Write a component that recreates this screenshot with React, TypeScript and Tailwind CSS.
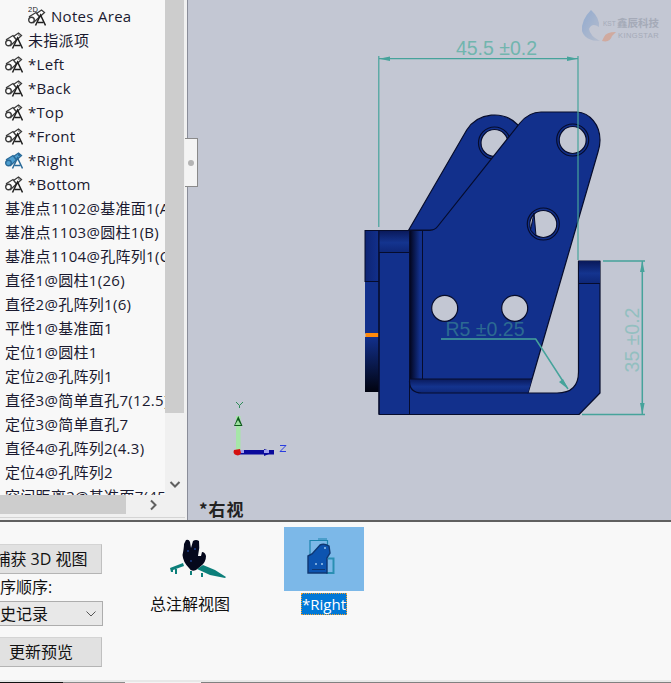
import React from "react";

const cjk = "font-['Open_Sans','Noto_Sans_CJK_SC',sans-serif]";

function TagIcon({ active }: { active?: boolean }) {
  const s = active ? "#2a6a98" : "#3a3a3a";
  const f = active ? "#4f9fd0" : "#fff";
  return (
    <svg width="18" height="17" viewBox="0 0 18 17" className="shrink-0">
      <path d="M8.5 4.5 L13.5 1 L16.5 3.5 L11.5 8 Z" fill={f} stroke={s} strokeWidth="1.3" />
      <circle cx="14" cy="3" r="0.9" fill={active ? "#1f5a88" : "#777"} />
      <path d="M1.5 7.5 L8 3.5 L11.5 8 L5.5 13.5 Z" fill={f} stroke={s} strokeWidth="1.3" />
      <circle cx="3.5" cy="11" r="2.8" fill={f} stroke={s} strokeWidth="1.4" />
      <path d="M7.5 16.5 L12.5 6 L17.5 16.5 M9.8 13.5 H15.2" fill="none" stroke={active ? "#2a6a98" : "#1f1f1f"} strokeWidth="1.5" />
    </svg>
  );
}

function NotesIcon() {
  return (
    <svg width="18" height="22" viewBox="0 0 18 22" className="shrink-0">
      <path d="M8.5 8.5 L13.5 5 L16.5 7.5 L11.5 12 Z" fill="#fff" stroke="#3a3a3a" strokeWidth="1.3" />
      <path d="M1.5 11.5 L8 7.5 L11.5 12 L5.5 17.5 Z" fill="#fff" stroke="#3a3a3a" strokeWidth="1.3" />
      <circle cx="3.5" cy="15" r="2.8" fill="#fff" stroke="#3a3a3a" strokeWidth="1.4" />
      <path d="M7.5 20.5 L12.5 10 L17.5 20.5 M9.8 17.5 H15.2" fill="none" stroke="#1f1f1f" strokeWidth="1.5" />
      <text x="0" y="7" fontFamily="Liberation Sans, sans-serif" fontSize="7.5" fill="#222">2D</text>
    </svg>
  );
}

const tagged = ["未指派项", "*Left", "*Back", "*Top", "*Front", "*Right", "*Bottom"];
const plain = [
  "基准点1102@基准面1(A)",
  "基准点1103@圆柱1(B)",
  "基准点1104@孔阵列1(C)",
  "直径1@圆柱1(26)",
  "直径2@孔阵列1(6)",
  "平性1@基准面1",
  "定位1@圆柱1",
  "定位2@孔阵列1",
  "直径3@简单直孔7(12.5)",
  "定位3@简单直孔7",
  "直径4@孔阵列2(4.3)",
  "定位4@孔阵列2",
  "空间距离2@基准面7(45.5)",
];

function Tree() {
  return (
    <div className="w-[165px] h-full bg-[#f8f8f8] overflow-hidden pt-[4px] tracking-[0.3px]">
      <div className="h-[24px] flex items-center pl-[28px] gap-[5px] text-[15px] leading-[24px] text-[#1a1a30] whitespace-nowrap">
        <NotesIcon />
        Notes Area
      </div>
      {tagged.map((t) => (
        <div key={t} className="h-[24px] flex items-center pl-[5px] gap-[5px] text-[15px] leading-[24px] text-[#1a1a30] whitespace-nowrap">
          <TagIcon active={t === "*Right"} />
          {t}
        </div>
      ))}
      {plain.map((t) => (
        <div key={t} className="h-[24px] flex items-center pl-[5px] text-[15px] leading-[24px] text-[#1a1a30] whitespace-nowrap">
          {t}
        </div>
      ))}
    </div>
  );
}

function Chevron({ d }: { d: string }) {
  return (
    <svg width="12" height="12" viewBox="0 0 12 12">
      <path d={d} fill="none" stroke="#606060" strokeWidth="2" />
    </svg>
  );
}

function Part() {
  const teal = "#46a39b";
  const blue = "#12308c";
  const line = "#060c2c";
  return (
    <svg viewBox="188 0 483 520" className="w-full h-full block">
      <defs>
        <linearGradient id="fade" x1="0" x2="1" y1="0" y2="0">
          <stop offset="0" stopColor="#02041a" />
          <stop offset="0.8" stopColor="#12308c" />
        </linearGradient>
        <linearGradient id="vdark" x1="0" x2="0" y1="0" y2="1">
          <stop offset="0" stopColor="#12308c" />
          <stop offset="1" stopColor="#01030f" />
        </linearGradient>
        <linearGradient id="band" x1="0" x2="0" y1="0" y2="1">
          <stop offset="0" stopColor="#0a1a5c" />
          <stop offset="0.55" stopColor="#14348f" />
          <stop offset="1" stopColor="#0e2778" />
        </linearGradient>
        <linearGradient id="col" x1="0" x2="1" y1="0" y2="0">
          <stop offset="0" stopColor="#0d2474" />
          <stop offset="1" stopColor="#12308c" />
        </linearGradient>
        <linearGradient id="drop" x1="0" x2="1" y1="0" y2="1">
          <stop offset="0" stopColor="#8aa6cf" />
          <stop offset="1" stopColor="#b4bccd" />
        </linearGradient>
      </defs>

      {/* back flap */}
      <path d="M408.7 230 L466.7 130 A33 33 0 0 1 518 125 L470 230 Z" fill={blue} stroke={line} strokeWidth="1.2" />
      <circle cx="494.5" cy="143" r="16" fill={blue} stroke={line} strokeWidth="1.2" />
      <circle cx="494.5" cy="143" r="13.5" fill="#c3c7d3" stroke={line} strokeWidth="1.2" />

      {/* left column */}
      <rect x="365" y="230.5" width="14.5" height="103" fill={blue} />
      <rect x="365" y="337" width="14.5" height="55" fill="url(#vdark)" />
      <rect x="365" y="230.5" width="14.5" height="51" fill="url(#col)" stroke={line} strokeWidth="1" />
      <rect x="365.5" y="333" width="14" height="4" fill="#ff8a0c" />

      {/* main body */}
      <path
        d="M379 230.5 H430 Q435 230 438 226 L520 123 Q529 112 541 112 H577 A24 28 0 0 1 600 140 Q600 146 598 152 L528 393 H557 Q578.5 393 578.5 372 V261 H600 V393 L579 414.5 H379 Z"
        fill={blue}
        stroke={line}
        strokeWidth="1.2"
        strokeLinejoin="round"
      />

      {/* shaded faces of the bracket */}
      <rect x="379" y="231" width="30" height="21" fill="url(#band)" />
      <rect x="409.5" y="231" width="13" height="148" fill="url(#fade)" />
      <path d="M409.5 379 H532 L528 393 H422 Q409.5 393 409.5 381 Z" fill="url(#band)" />
      <path d="M379 230.5 V414 M409.5 230.5 V414 M422.5 230.5 V379 M379 252.5 H409.5 M410 379 H532" fill="none" stroke={line} strokeWidth="1" />
      <path d="M409.5 381 Q409.5 393 422 393 H528" fill="none" stroke={line} strokeWidth="1.2" />
      <rect x="579" y="261.5" width="21" height="21.5" fill="url(#band)" />
      <path d="M578.5 283.5 H600" stroke={line} strokeWidth="1" />

      {/* holes */}
      <circle cx="572.7" cy="140" r="16" fill={blue} stroke={line} strokeWidth="1.2" />
      <circle cx="572.7" cy="140" r="13.5" fill="#c3c7d3" stroke={line} strokeWidth="1.2" />
      <circle cx="543.3" cy="224" r="16" fill={blue} stroke={line} strokeWidth="1.2" />
      <circle cx="543.3" cy="224" r="13.5" fill="#c3c7d3" stroke={line} strokeWidth="1.2" />
      <path d="M534 213 L536 236 L530.5 230 Z" fill={blue} stroke={line} strokeWidth="1" />
      <circle cx="444.7" cy="308.3" r="13" fill="#c3c7d3" stroke={line} strokeWidth="1.2" />
      <circle cx="514.7" cy="308.3" r="13" fill="#c3c7d3" stroke={line} strokeWidth="1.2" />

      {/* dimension 45.5 */}
      <path d="M378.8 56 V227 M578 56 V260 M379 58.7 H578" fill="none" stroke={teal} strokeWidth="1.2" />
      <path d="M379 58.7 L390 56.5 V61 Z M578 58.7 L567 56.5 V61 Z" fill={teal} />
      <text x="496.5" y="55" textAnchor="middle" fontFamily="Liberation Sans, sans-serif" fontSize="19.5" fill="#71b5ae">45.5 ±0.2</text>

      {/* dimension 35 */}
      <path d="M603 261 H645 M582 414.5 H645 M642.3 261 V414.5" fill="none" stroke={teal} strokeWidth="1.5" />
      <path d="M642.3 261 L640 272 H644.6 Z M642.3 414.5 L640 403 H644.6 Z" fill={teal} />
      <text transform="translate(638.5 340) rotate(-90)" textAnchor="middle" fontFamily="Liberation Sans, sans-serif" fontSize="19.5" fill="#93bfc0">35 ±0.2</text>

      {/* R5 */}
      <path d="M441 339 H535.7 L568 389" fill="none" stroke={teal} strokeWidth="1.5" />
      <path d="M568 389 L559 382 L563 379 Z" fill={teal} />
      <text x="485" y="335.5" textAnchor="middle" fontFamily="Liberation Sans, sans-serif" fontSize="19.5" fill="#2c6a92">R5 ±0.25</text>

      {/* triad */}
      <rect x="236" y="416" width="4.5" height="36" fill="#a6e6a8" />
      <path d="M238.3 416 L234 426 H242.5 Z" fill="#0e5a1c" />
      <path d="M238 420 L241 425 H235 Z" fill="#9ce09e" />
      <rect x="238" y="450" width="36" height="4.5" fill="#0a0a9c" />
      <path d="M274 452 L264 449 V456 Z" fill="#0a0a9c" />
      <rect x="264" y="450" width="5" height="3" fill="#a0a0ee" />
      <rect x="238" y="450" width="6" height="3" fill="#a0a0ee" />
      <path d="M234 450 A3.6 3.6 0 1 0 241 453 L240 449 Z" fill="#d41010" />
      <path d="M236 402 L239.5 405.5 L243 402 M239.5 405.5 V408" fill="none" stroke="#2e8b57" strokeWidth="1" />
      <path d="M280 445.5 H286 L280 451.5 H286" fill="none" stroke="#2a3ee0" strokeWidth="1" />

      {/* watermark */}
      <g opacity="0.85">
        <path d="M591 10 Q581 20 582 31 Q585 41 600 41 Q590 36 589 29 Q592 22 599 27 Q600 18 591 10 Z" fill="url(#drop)" />
        <path d="M602 41 Q610 43 612 36 L616 32 Q606 32 604 37 Q603 39 602 41 Z" fill="#d3a596" />
        <text x="603" y="26" fontFamily="Liberation Sans, sans-serif" fontSize="6.5" fill="#a0a6b4">KST</text>
        <text x="617" y="26.5" fontFamily="'Noto Sans CJK SC', sans-serif" fontWeight="700" fontSize="10.5" fill="#a0a6b4">鑫辰科技</text>
        <text x="618" y="37.5" fontFamily="Liberation Sans, sans-serif" fontSize="7.5" letterSpacing="0.4" fill="#a0a6b4">KINGSTAR</text>
      </g>
    </svg>
  );
}

function Thumb1() {
  return (
    <svg width="60" height="44" viewBox="168 538 60 44" className="block">
      <path d="M170 568 L183 563 L184 566 L173 570 L173 572 H171 Z M175 569 h2 v5 h-2 Z M190 571 h2 v4 h-2 Z M201 573 h2 v4 h-2 Z" fill="#0c7f7a" />
      <path d="M197 569 L203 565 L215 570 L226 577 L225 578 L210 575 Z" fill="#0c7f7a" />
      <path d="M186 540 Q189 539 190 542 L191 548 L193 541 Q196 539 199 541 Q200 548 198 556 L201 556 L202 552 Q205 552 206 556 Q206 562 201 566 L196 570 Q191 572 189 568 Q183 562 182.5 555 Q184 548 184 544 Z" fill="#05081c" />
      <path d="M187 550 h2 v2 h-2z M194 548 h2 v2 h-2z M190 560 h2 v2 h-2z" fill="#16306e" />
    </svg>
  );
}

function Thumb2() {
  return (
    <svg width="30" height="38" viewBox="306 537 30 38" className="block">
      <path d="M310 556 V540.5 H327.5 V545 M318 539 H327" fill="none" stroke="#1b83ae" strokeWidth="1.2" />
      <path d="M328 558.5 H333.5 V573 H326" fill="none" stroke="#2a8fb3" strokeWidth="2" />
      <path d="M308 556 L312 554 L320 545 Q324 543 329 546 L330 553 L327 558 V573 H308 Z" fill="#0d54b0" stroke="#0f3772" strokeWidth="1.4" />
      <circle cx="325" cy="548" r="1" fill="#9dc5ea" />
      <circle cx="316" cy="564" r="1" fill="#9dc5ea" />
      <circle cx="322" cy="564" r="1" fill="#9dc5ea" />
      <path d="M312 569.5 H325" fill="none" stroke="#0f3772" strokeWidth="1" />
    </svg>
  );
}

export default function App() {
  return (
    <div className={`w-[671px] h-[683px] overflow-hidden flex flex-col bg-[#f8f8f8] ${cjk}`}>
      <div className="h-[520px] flex shrink-0">
        <div className="w-[185px] h-full bg-[#f0f0f0] flex flex-col relative">
          <div className="flex flex-1 min-h-0">
            <Tree />
            <div className="w-[19px] flex flex-col items-center bg-[#f0f0f0]">
              <div className="w-full h-[413px] bg-[#cdcdcd]" />
              <div className="mt-auto mb-[5px]">
                <Chevron d="M1.5 4 L6 8.5 L10.5 4" />
              </div>
            </div>
          </div>
          <div className="h-[25px] flex flex-col shrink-0">
            <div className="h-[19px] flex">
              <div className="w-[126px] h-full bg-[#cdcdcd]" />
              <div className="flex-1 h-full flex items-center justify-center pr-[5px]">
                <Chevron d="M4 1.5 L8.5 6 L4 10.5" />
              </div>
            </div>
            <div className="h-[3px]" />
            <div className="h-[1px] bg-[#d4d4d4]" />
          </div>
        </div>
        <div className="w-[2px] h-full bg-[#f0f0f0] relative z-10">
          <div className="absolute left-0 top-[138px] w-[13px] h-[49px] bg-[#f4f4f4] border border-l-0 border-[#8a8a8a] flex items-center justify-center">
            <span className="w-[6px] h-[6px] rounded-full bg-[#b4b4b4]" />
          </div>
        </div>
        <div className="flex-1 h-full bg-[#c3c7d3] border-l border-[#8a8d99] relative overflow-hidden">
          <Part />
          <div className="absolute left-[11px] top-[498px] text-[17px] leading-[22px] tracking-[1px] font-bold text-[#222] font-['Noto_Sans_CJK_SC',sans-serif]">
            *右视
          </div>
        </div>
      </div>

      <div className="h-[2px] shrink-0 bg-[#606060]" />

      <div className="flex-1 min-h-0 flex items-start bg-[#f8f8f8]">
        <div className="w-[140px] shrink-0 flex flex-col overflow-hidden pt-[22px] text-[16px] text-[#111]">
          <div className="-ml-[20px] w-[122px] h-[30px] bg-[#e1e1e1] border border-[#d4d4d4] border-r-[#c0c0c0] border-b-[#b4b4b4] flex items-center justify-center whitespace-nowrap">
            捕获 3D 视图
          </div>
          <div className="-ml-[16px] mt-[1px] h-[24px] leading-[24px] whitespace-nowrap">排序顺序:</div>
          <div className="-ml-[20px] w-[123px] h-[25px] mt-[2px] bg-[#e8e8e8] border border-[#adadad] flex items-center justify-between pl-[3px] pr-[6px]">
            <span>历史记录</span>
            <svg width="10" height="6" viewBox="0 0 10 6">
              <path d="M0.5 0.5 L5 5 L9.5 0.5" fill="none" stroke="#555" strokeWidth="1" />
            </svg>
          </div>
          <div className="-ml-[20px] w-[122px] h-[30px] mt-[11px] bg-[#e1e1e1] border border-[#d4d4d4] border-r-[#c0c0c0] border-b-[#b4b4b4] flex items-center justify-center">
            更新预览
          </div>
        </div>

        <div className="w-[100px] mt-[5px] flex flex-col items-center shrink-0">
          <div className="h-[64px] flex items-center pt-[2px] pl-[16px] w-full justify-center">
            <Thumb1 />
          </div>
          <div className="mt-[2px] h-[22px] text-[16px] leading-[22px] text-[#111] whitespace-nowrap">总注解视图</div>
        </div>

        <div className="ml-[44px] mt-[5px] w-[80px] flex flex-col items-center shrink-0">
          <div className="w-[80px] h-[64px] bg-[#7cb8e8] flex items-center justify-center pr-[6px] pb-[6px]">
            <Thumb2 />
          </div>
          <div className="mt-[2px] h-[22px] bg-[#0078d7] border border-dotted border-[#f0a030] text-[15px] leading-[20px] text-white whitespace-nowrap">
            *Right
          </div>
        </div>
      </div>

      <div className="h-[3px] shrink-0 flex flex-col">
        <div className="h-[2px] bg-[#e8e8e8]" />
        <div className="h-[1px] flex">
          <div className="w-[63px] bg-[#111]" />
          <div className="w-[62px] bg-[#8a8a8a]" />
          <div className="w-[76px] bg-[#f4f4f4]" />
          <div className="flex-1 bg-[#808080]" />
        </div>
      </div>
    </div>
  );
}
